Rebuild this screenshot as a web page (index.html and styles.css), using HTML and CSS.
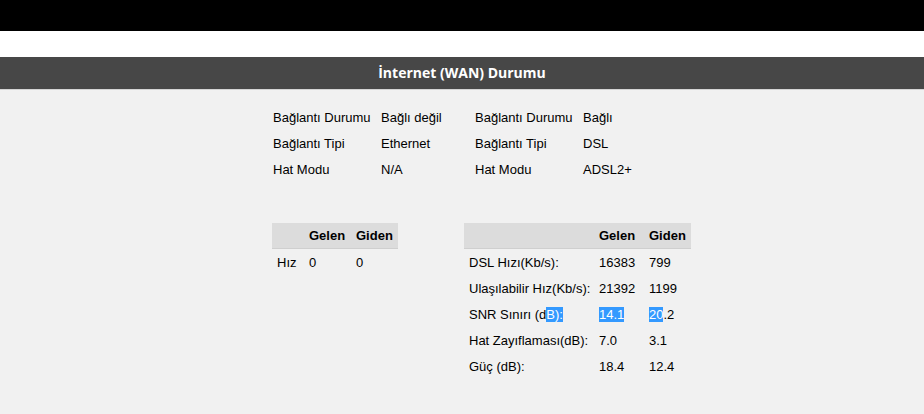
FILE: index.html
```html
<!DOCTYPE html>
<html lang="tr">
<head>
<meta charset="utf-8">
<title>İnternet (WAN) Durumu</title>
<link rel="stylesheet" href="styles.css">
</head>
<body>
<div class="topbar"></div>
<div class="gap"></div>
<h1 class="title">İnternet (WAN) Durumu</h1>
<main class="content">
  <table class="info">
    <tr><td class="c1">Bağlantı Durumu</td><td class="c2">Bağlı değil</td><td class="c3">Bağlantı Durumu</td><td>Bağlı</td></tr>
    <tr><td class="c1">Bağlantı Tipi</td><td class="c2">Ethernet</td><td class="c3">Bağlantı Tipi</td><td>DSL</td></tr>
    <tr><td class="c1">Hat Modu</td><td class="c2">N/A</td><td class="c3">Hat Modu</td><td>ADSL2+</td></tr>
  </table>
  <div class="stats">
    <table class="grid wan">
      <thead><tr><th class="w1"></th><th class="w2">Gelen</th><th class="w3">Giden</th></tr></thead>
      <tbody><tr><td>Hız</td><td>0</td><td>0</td></tr></tbody>
    </table>
    <table class="grid dsl">
      <thead><tr><th class="d1"></th><th class="d2">Gelen</th><th class="d3">Giden</th></tr></thead>
      <tbody>
        <tr><td>DSL Hızı(Kb/s):</td><td>16383</td><td>799</td></tr>
        <tr><td>Ulaşılabilir Hız(Kb/s):</td><td>21392</td><td>1199</td></tr>
        <tr><td>SNR Sınırı (d<span class="sel">B):</span></td><td><span class="sel">14.1</span></td><td><span class="sel">20</span>.2</td></tr>
        <tr><td>Hat Zayıflaması(dB):</td><td>7.0</td><td>3.1</td></tr>
        <tr><td>Güç (dB):</td><td>18.4</td><td>12.4</td></tr>
      </tbody>
    </table>
  </div>
</main>
</body>
</html>
```

FILE: styles.css
```css
html, body {
  margin: 0;
  padding: 0;
}

body {
  background: #f1f1f1;
  font-family: "Liberation Sans", Arial, sans-serif;
  font-size: 13px;
  color: #000;
  min-height: 414px;
}

.topbar {
  height: 31px;
  background: #000;
}

.gap {
  height: 26px;
  background: #fff;
}

.title {
  margin: 0;
  height: 32px;
  line-height: 32px;
  background: #474747;
  border-bottom: 1px solid #d4d4d4;
  color: #fff;
  text-align: center;
  font-family: "Open Sans", sans-serif;
  font-size: 14px;
  font-weight: 700;
}

.content {
  padding: 14px 0 0 270px;
}

table {
  border-collapse: collapse;
  border-spacing: 0;
}

.info td {
  height: 26px;
  padding: 0 0 0 3px;
  white-space: nowrap;
}

.info .c1 { width: 105px; }
.info .c2 { width: 91px; }
.info .c3 { width: 105px; }

.stats {
  display: flex;
  align-items: flex-start;
  gap: 66px;
  margin: 41px 0 0 2px;
}

.grid th {
  height: 25px;
  background: #dcdcdc;
  border-bottom: 1px solid #cfcfcf;
  text-align: left;
  font-weight: 700;
  padding: 0 0 0 4px;
}

.grid td {
  height: 26px;
  padding: 0 0 0 5px;
  white-space: nowrap;
}

.wan td + td { padding-left: 4px; }

.w1 { width: 29px; }
.w2 { width: 43px; }
.w3 { width: 42px; }

.dsl td + td, .dsl th { padding-left: 5px; }
.d1 { width: 125px; }
.d2 { width: 45px; }
.d3 { width: 42px; }

.sel {
  background: #3399ff;
  color: #fff;
}
```
